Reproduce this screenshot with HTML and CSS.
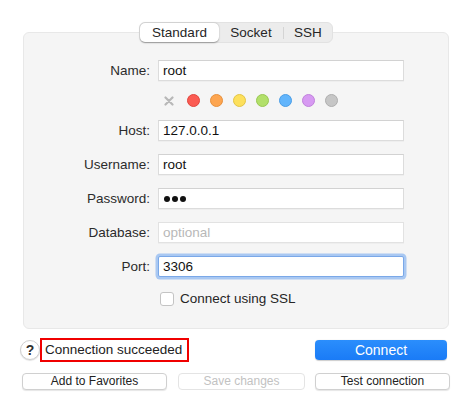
FILE: index.html
```html
<!DOCTYPE html>
<html>
<head>
<meta charset="utf-8">
<link rel="stylesheet" href="styles.css">
</head>
<body>
<div class="window">
  <div class="tabs">
    <div class="tab selected">Standard</div>
    <div class="tab">Socket</div>
    <div class="sep"></div>
    <div class="tab">SSH</div>
  </div>
  <div class="panel">
    <div class="form">
      <label class="lbl">Name:</label>
      <div class="field">root</div>

      <div></div>
      <div class="colors">
        <svg class="xmark" width="10" height="10" viewBox="0 0 10 10"><path d="M1.5 1.5 L8.5 8.5 M8.5 1.5 L1.5 8.5" stroke="#b8b8b8" stroke-width="2.2" stroke-linecap="round"/></svg>
        <span class="dot red"></span>
        <span class="dot orange"></span>
        <span class="dot yellow"></span>
        <span class="dot green"></span>
        <span class="dot blue"></span>
        <span class="dot purple"></span>
        <span class="dot gray"></span>
      </div>

      <label class="lbl">Host:</label>
      <div class="field">127.0.0.1</div>

      <label class="lbl">Username:</label>
      <div class="field">root</div>

      <label class="lbl">Password:</label>
      <div class="field pw"><span class="pd"></span><span class="pd"></span><span class="pd"></span></div>

      <label class="lbl">Database:</label>
      <div class="field placeholder">optional</div>

      <label class="lbl">Port:</label>
      <div class="field focus">3306</div>

      <div></div>
      <div class="check"><span class="box"></span><span>Connect using SSL</span></div>
    </div>
  </div>
  <div class="footer">
    <div class="status-row">
      <div class="help">?</div>
      <div class="status">Connection succeeded</div>
      <div class="spacer"></div>
      <div class="btn primary">Connect</div>
    </div>
    <div class="btn-row">
      <div class="btn small fav">Add to Favorites</div>
      <div class="btn small disabled save">Save changes</div>
      <div class="btn small test">Test connection</div>
    </div>
  </div>
</div>
</body>
</html>
```
FILE: styles.css
```css
* { box-sizing: border-box; }
html, body {
  margin: 0;
  padding: 0;
  background: #ffffff;
}
body {
  font-family: "Liberation Sans", Arial, sans-serif;
  font-size: 13.5px;
  color: #262626;
  width: 463px;
  height: 403px;
  overflow: hidden;
  white-space: nowrap;
}
.window {
  padding: 22px 0 0 0;
  display: flex;
  flex-direction: column;
}
.tabs {
  align-self: flex-start;
  margin-left: 139px;
  width: 194px;
  height: 21px;
  display: flex;
  align-items: center;
  background: #ececec;
  border: 1px solid #e2e2e2;
  border-radius: 6px;
  position: relative;
  z-index: 2;
  margin-bottom: -11px;
  font-size: 13.5px;
  color: #262626;
}
.tab {
  height: 19px;
  line-height: 19px;
  text-align: center;
}
.tab.selected {
  width: 79px;
  background: #fff;
  border-radius: 5px;
  box-shadow: 0 0.5px 1.5px rgba(0,0,0,0.35);
}
.tab:nth-child(2) { width: 64px; }
.sep { width: 1px; height: 12px; background: #d4d4d4; }
.tab:nth-child(4) { flex: 1; }
.panel {
  margin: 0 14px 0 23px;
  height: 297px;
  background: #f5f5f5;
  border: 1px solid #e8e8e8;
  border-radius: 6px;
  padding-top: 27px;
}
.form {
  display: grid;
  grid-template-columns: 126px 246px;
  column-gap: 8px;
  row-gap: 13px;
  align-items: center;
}
.lbl {
  text-align: right;
  color: #2b2b2b;
}
.field {
  height: 21px;
  background: #fff;
  border: 1px solid #dcdcdc;
  border-top-color: #d2d2d2;
  box-shadow: 0 0.5px 0 rgba(0,0,0,0.06);
  padding-left: 4px;
  line-height: 19px;
  color: #111;
}
.field.pw { display: flex; align-items: center; gap: 2px; padding-left: 5px; }
.pd { width: 6px; height: 6px; border-radius: 50%; background: #111; }
.field.placeholder { color: #b8b8b8; border-color: #e2e2e2; }
.field.focus {
  border: 1px solid #7aa8e8;
  box-shadow: 0 0 0 2.5px #a9c8f2;
  border-radius: 2px;
}
.colors {
  height: 13px;
  display: flex;
  align-items: center;
  gap: 10px;
  padding-left: 6px;
}
.xmark { margin-right: 3px; }
.dot {
  width: 13px;
  height: 13px;
  border-radius: 50%;
  display: inline-block;
}
.dot.red { background: #fb5b52; border: 1px solid #e0463e; }
.dot.orange { background: #fda550; border: 1px solid #e7903c; }
.dot.yellow { background: #fde05c; border: 1px solid #e3c545; }
.dot.green { background: #b2e06a; border: 1px solid #99c852; }
.dot.blue { background: #62b5fc; border: 1px solid #4a9de6; }
.dot.purple { background: #d79af2; border: 1px solid #c081dc; }
.dot.gray { background: #c6c6c6; border: 1px solid #aeaeae; }
.check {
  margin-top: 1px;
  display: flex;
  align-items: center;
  gap: 6px;
  padding-left: 2px;
  color: #262626;
}
.box {
  width: 14px;
  height: 14px;
  background: #fff;
  border: 1px solid #c4c4c4;
  border-radius: 3px;
}
.footer {
  padding: 9px 13px 0 20px;
  display: flex;
  flex-direction: column;
}
.status-row {
  display: flex;
  align-items: center;
  height: 24px;
}
.help {
  width: 20px;
  height: 20px;
  border-radius: 50%;
  background: #fff;
  border: 1px solid #d0d0d0;
  box-shadow: 0 1px 1px rgba(0,0,0,0.12);
  text-align: center;
  line-height: 18px;
  font-size: 14px;
  font-weight: bold;
  color: #303030;
}
.status {
  margin-left: 0;
  height: 24px;
  width: 149px;
  border: 2px solid #f00000;
  padding-left: 3px;
  line-height: 20px;
  color: #222;
}
.spacer { flex: 1; }
.btn {
  background: #fff;
  border: 1px solid #d0d0d0;
  border-radius: 4px;
  text-align: center;
  color: #222;
  box-shadow: 0 1px 1px rgba(0,0,0,0.1);
}
.btn.primary {
  width: 132px;
  height: 20px;
  line-height: 20px;
  background: linear-gradient(#2b8efc, #1a7bf6);
  border: none;
  color: #fff;
  font-size: 14px;
  margin-right: 3px;
  box-shadow: 0 0.5px 1px rgba(0,0,0,0.2);
}
.btn-row {
  margin-top: 11px;
  display: flex;
  padding-left: 2px;
}
.btn.small {
  height: 17px;
  line-height: 15px;
  font-size: 12px;
}
.fav { width: 145px; }
.save { width: 127px; margin-left: 11px; }
.test { width: 135px; margin-left: 10px; }
.btn.disabled { color: #c2c2c2; border-color: #e4e4e4; box-shadow: none; }
```
